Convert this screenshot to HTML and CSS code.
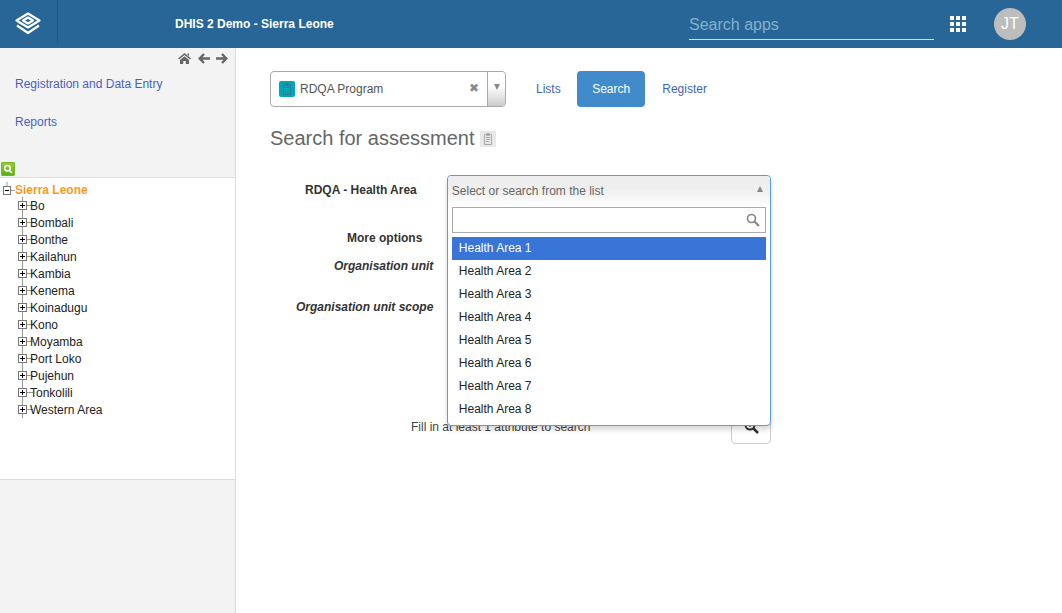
FILE: index.html
```html
<!DOCTYPE html>
<html lang="en">
<head>
<meta charset="utf-8">
<title>Search for assessment</title>
<link rel="stylesheet" href="styles.css">
</head>
<body>
<svg class="defs" width="0" height="0" aria-hidden="true">
  <symbol id="plus" viewBox="0 0 15 17">
    <path d="M4.5 0V17M9 8.5H15" stroke="#999" fill="none"/>
    <rect x="0.5" y="4.5" width="8" height="8" fill="#fff" stroke="#777"/>
    <path d="M2 8.5H7M4.5 6V11" stroke="#000" fill="none"/>
  </symbol>
  <symbol id="clip" viewBox="0 0 16 16">
    <path d="M4.5 3.500H11.500V13.500H4.500ZM6.500 2.500H9.500V4.500H6.500ZM6 6.500H10M6 8.500H10M6 10.500H9" fill="none" stroke="currentColor"/>
  </symbol>
</svg>
<header class="topbar">
  <a class="logo" href="#">
    <svg width="26" height="23" viewBox="0 0 26 23"><path d="M13 1.500L24.500 8.500L13 15.500L1.500 8.500ZM13 5.500L18 8.500L13 11.500L8 8.500ZM2 13.500L13 21L24 13.500" fill="none" stroke="#fff" stroke-width="2.200" stroke-linejoin="round"/></svg>
  </a>
  <div class="title">DHIS 2 Demo - Sierra Leone</div>
  <div class="appsearch">Search apps</div>
  <svg class="grid" width="16" height="16" viewBox="0 0 16 16" fill="#fff"><path d="M0 0h4v4H0zM6 0h4v4H6zM12 0h4v4h-4zM0 6h4v4H0zM6 6h4v4H6zM12 6h4v4h-4zM0 12h4v4H0zM6 12h4v4H6zM12 12h4v4h-4z"/></svg>
  <div class="avatar">JT</div>
</header>
<div class="layout">
  <aside class="sidebar">
    <div class="sidetools">
      <svg width="13" height="11" viewBox="0 0 13 11" fill="#666"><path d="M6.500 0L13 5.500L12 6.500L6.500 2L1 6.500L0 5.500ZM2 7L6.500 3.200L11 7V11H7.800V8H5.200V11H2ZM9.500 0.500H11V3L9.500 2Z"/></svg>
      <svg width="12" height="11" viewBox="0 0 12 11" fill="none" stroke="#666" stroke-width="2.400"><path d="M6 1L1.700 5.500L6 10M2 5.500H12"/></svg>
      <svg width="12" height="11" viewBox="0 0 12 11" fill="none" stroke="#666" stroke-width="2.400"><path d="M6 1L10.300 5.500L6 10M10 5.500H0"/></svg>
    </div>
    <nav class="sidenav">
      <a href="#">Registration and Data Entry</a>
      <a href="#">Reports</a>
    </nav>
    <div class="treetool">
      <span class="treebtn"><svg width="10" height="10" viewBox="0 0 10 10" fill="none" stroke="#fff" stroke-width="1.500"><circle cx="4.500" cy="4.200" r="2.800"/><path d="M6.500 6.500L9 9"/></svg></span>
    </div>
    <div class="tree">
      <div class="root">
        <svg class="rooticon" width="15" height="17" viewBox="0 0 15 17"><path d="M7 0V4M11 8.500H15" stroke="#999" fill="none"/><rect x="3.500" y="4.500" width="7" height="8" fill="#fff" stroke="#777"/><path d="M5 8.500H9" stroke="#000"/></svg>
        <span>Sierra Leone</span>
      </div>
      <ul class="nodes">
        <li><svg width="15" height="17"><use href="#plus"/></svg><span>Bo</span></li>
        <li><svg width="15" height="17"><use href="#plus"/></svg><span>Bombali</span></li>
        <li><svg width="15" height="17"><use href="#plus"/></svg><span>Bonthe</span></li>
        <li><svg width="15" height="17"><use href="#plus"/></svg><span>Kailahun</span></li>
        <li><svg width="15" height="17"><use href="#plus"/></svg><span>Kambia</span></li>
        <li><svg width="15" height="17"><use href="#plus"/></svg><span>Kenema</span></li>
        <li><svg width="15" height="17"><use href="#plus"/></svg><span>Koinadugu</span></li>
        <li><svg width="15" height="17"><use href="#plus"/></svg><span>Kono</span></li>
        <li><svg width="15" height="17"><use href="#plus"/></svg><span>Moyamba</span></li>
        <li><svg width="15" height="17"><use href="#plus"/></svg><span>Port Loko</span></li>
        <li><svg width="15" height="17"><use href="#plus"/></svg><span>Pujehun</span></li>
        <li><svg width="15" height="17"><use href="#plus"/></svg><span>Tonkolili</span></li>
        <li><svg width="15" height="17"><use href="#plus"/></svg><span>Western Area</span></li>
      </ul>
    </div>
  </aside>
  <main class="content">
    <div class="toprow">
      <div class="program">
        <svg class="progicon" width="16" height="16" viewBox="0 0 16 16"><rect width="16" height="16" rx="2" fill="#00a5bd"/><use href="#clip" color="#2a7f8f"/></svg>
        <span class="progname">RDQA Program</span>
        <span class="clear">✖</span>
        <span class="arrowbox"><i class="tri down"></i></span>
      </div>
      <nav class="tabs">
        <a href="#" class="lists">Lists</a>
        <a href="#" class="active">Search</a>
        <a href="#" class="register">Register</a>
      </nav>
    </div>
    <h1 class="heading">Search for assessment
      <span class="headicon"><svg width="16" height="16" color="#aaa"><use href="#clip"/></svg></span>
    </h1>
    <form class="form">
      <div class="row r1">
        <label class="lab">RDQA - Health Area</label>
        <div class="selectwrap">
          <div class="dropdown">
            <div class="ddhead"><span>Select or search from the list</span><i class="tri up"></i></div>
            <div class="ddsearch">
              <svg width="14" height="14" viewBox="0 0 14 14" fill="none" stroke="#888" stroke-width="1.700"><circle cx="5.500" cy="5.500" r="4"/><path d="M8.500 8.500L13 13" stroke-width="2.200"/></svg>
            </div>
            <ul class="ddlist">
              <li class="on">Health Area 1</li>
              <li>Health Area 2</li>
              <li>Health Area 3</li>
              <li>Health Area 4</li>
              <li>Health Area 5</li>
              <li>Health Area 6</li>
              <li>Health Area 7</li>
              <li>Health Area 8</li>
            </ul>
          </div>
        </div>
      </div>
      <div class="row r2"><label class="lab more">More options</label></div>
      <div class="row r3"><label class="lab it">Organisation unit</label></div>
      <div class="row r4"><label class="lab it">Organisation unit scope</label></div>
      <div class="actions">
        <span class="hint">Fill in at least 1 attribute to search</span>
        <span class="searchbtn"><svg width="16" height="16" viewBox="0 0 16 16" fill="none" stroke="#333" stroke-width="2"><circle cx="7" cy="7" r="4.500"/><path d="M10.500 10.500L15 15" stroke-width="2.500"/><path d="M5 7H9M7 5V9" stroke-width="1.200"/></svg></span>
      </div>
    </form>
  </main>
</div>
</body>
</html>
```
FILE: styles.css
```css
* { box-sizing: border-box; }
html, body { height: 100%; }
body {
  margin: 0;
  font-family: "Liberation Sans", Arial, sans-serif;
  font-size: 12px;
  color: #333;
  background: #fff;
  overflow: hidden;
}
.defs { position: absolute; }
a { text-decoration: none; }
ul { list-style: none; margin: 0; padding: 0; }

.topbar {
  display: flex;
  align-items: center;
  height: 48px;
  background: #276696;
  color: #fff;
}
.logo {
  display: flex;
  align-items: center;
  justify-content: center;
  width: 58px;
  height: 44px;
  margin-bottom: 4px;
  border-right: 1px solid #215a86;
}
.logo svg { margin-top: 2px; margin-right: 1px; }
.title {
  margin-left: 117px;
  font-size: 12px;
  font-weight: 700;
  white-space: nowrap;
}
.appsearch {
  width: 245px;
  height: 40px;
  margin-left: auto;
  margin-bottom: 8px;
  border-bottom: 1px solid #cfe0ec;
  color: #84b1d0;
  font-size: 16px;
  line-height: 49px;
}
.grid { margin-left: 16px; }
.avatar {
  width: 32px;
  height: 32px;
  margin: 0 36px 0 28px;
  border-radius: 50%;
  background: #bdbdbd;
  color: #fff;
  font-size: 16px;
  line-height: 32px;
  text-align: center;
}

.layout { display: flex; height: 565px; }
.sidebar {
  display: flex;
  flex-direction: column;
  width: 236px;
  flex: none;
  background: #f3f3f3;
  border-right: 1px solid #ddd;
}
.sidetools {
  display: flex;
  justify-content: flex-end;
  align-items: center;
  gap: 6px;
  height: 11px;
  margin-top: 5px;
  padding-right: 7px;
}
.sidetools svg:first-child { margin-right: 1px; }
.sidenav { display: flex; flex-direction: column; gap: 24px; padding: 13px 0 0 15px; }
.sidenav a { color: #4a5fc4; line-height: 14px; }
.treetool { height: 15px; margin-top: 33px; padding-left: 1px; }
.treebtn {
  display: flex;
  align-items: center;
  justify-content: center;
  width: 14px;
  height: 14px;
  background: linear-gradient(#8fd12f, #5fae1a);
  border: 1px solid #7ab52a;
  border-radius: 1px;
}
.tree {
  height: 303px;
  background: #fff;
  border-top: 1px solid #ddd;
  border-bottom: 1px solid #ddd;
  padding-top: 4px;
}
.root { display: flex; height: 17px; align-items: center; padding-left: 0; color: #f79a1f; font-weight: 700; }
.root span { line-height: 17px; }
.nodes { padding-left: 18px; margin-top: -2px; }
.nodes li { display: flex; height: 17px; align-items: center; color: #222; }
.nodes svg { flex: none; margin-right: -3px; }

.content { flex: 1; padding: 23px 0 0 34px; }
.toprow { display: flex; align-items: flex-start; }
.program {
  display: flex;
  align-items: center;
  width: 236px;
  height: 36px;
  padding-left: 8px;
  border: 1px solid #aaa;
  border-radius: 4px;
  background: #fff;
}
.progicon { flex: none; margin-right: 5px; }
.progname { flex: 1; color: #555; margin-top: -1px; }
.clear { margin-right: 8px; color: #888; font-size: 11.500px; margin-top: -2px; }
.arrowbox {
  display: flex;
  justify-content: center;
  width: 18px;
  height: 34px;
  padding-top: 12px;
  border-left: 1px solid #aaa;
  border-radius: 0 4px 4px 0;
  background: linear-gradient(#fff, #fff 40%, #ccc);
}
.tri { display: block; width: 0; height: 0; border-left: 3.500px solid transparent; border-right: 3.500px solid transparent; }
.tri.down { border-top: 6px solid #888; }
.tri.up { border-bottom: 6px solid #888; }
.tabs { display: flex; margin-left: 15px; }
.tabs a {
  display: block;
  height: 36px;
  padding: 0 15px;
  border-radius: 4px;
  color: #3c66bd;
  line-height: 36px;
}
.tabs a.active { background: #428bca; color: #fff; }
.tabs a.lists { padding-right: 16.500px; }
.tabs a.register { padding-left: 17px; }

.heading {
  display: flex;
  align-items: center;
  gap: 5px;
  height: 24px;
  margin: 19px 0 0;
  color: #666;
  font-size: 20px;
  font-weight: 400;
}
.headicon { display: flex; width: 16px; height: 16px; margin-top: 2px; background: #e8e8e8; border-radius: 1px; }

.form { position: relative; width: 501px; margin-top: 25px; }
.row { display: flex; }
.lab { display: block; font-weight: 700; color: #333; text-align: right; }
.r1 { height: 56px; padding: 8px 0 0 35px; }
.selectwrap { position: relative; }
.dropdown {
  position: absolute;
  top: -8px;
  left: 30px;
  z-index: 5;
  width: 324px;
  height: 251px;
  padding: 0 4px;
  background: #fff;
  border: 1px solid #5897fb;
  border-radius: 4px;
  box-shadow: 0 4px 5px rgba(0, 0, 0, .15);
}
.ddhead {
  display: flex;
  justify-content: space-between;
  align-items: center;
  height: 31px;
  margin: 0 -4px;
  padding: 0 7px 2px 4px;
  color: #666;
  background: linear-gradient(#eee 40%, #fff);
  border-radius: 4px 4px 0 0;
}
.ddhead .tri { margin-top: -4px; }
.ddsearch {
  display: flex;
  align-items: center;
  justify-content: flex-end;
  height: 26px;
  padding-right: 5px;
  border: 1px solid #aaa;
  background: #fff;
}
.ddlist { margin-top: 4px; }
.ddlist li { height: 23px; padding-left: 7px; line-height: 23px; color: #222; }
.ddlist li.on { background: #3875d7; color: #fff; }

.r2 { padding-left: 77px; height: 28px; }
.r3 { height: 41px; padding-left: 64px; }
.r4 { height: 39px; padding-left: 26px; }
.it { font-style: italic; }
.actions { display: flex; padding: 81px 0 0 141px; }
.hint { color: #444; line-height: 14px; }
.searchbtn {
  position: absolute;
  top: 235px;
  left: 461px;
  display: flex;
  align-items: flex-end;
  justify-content: center;
  width: 40px;
  height: 34px;
  padding-bottom: 9px;
  border: 1px solid #ccc;
  border-radius: 4px;
  background: #fff;
}
```
